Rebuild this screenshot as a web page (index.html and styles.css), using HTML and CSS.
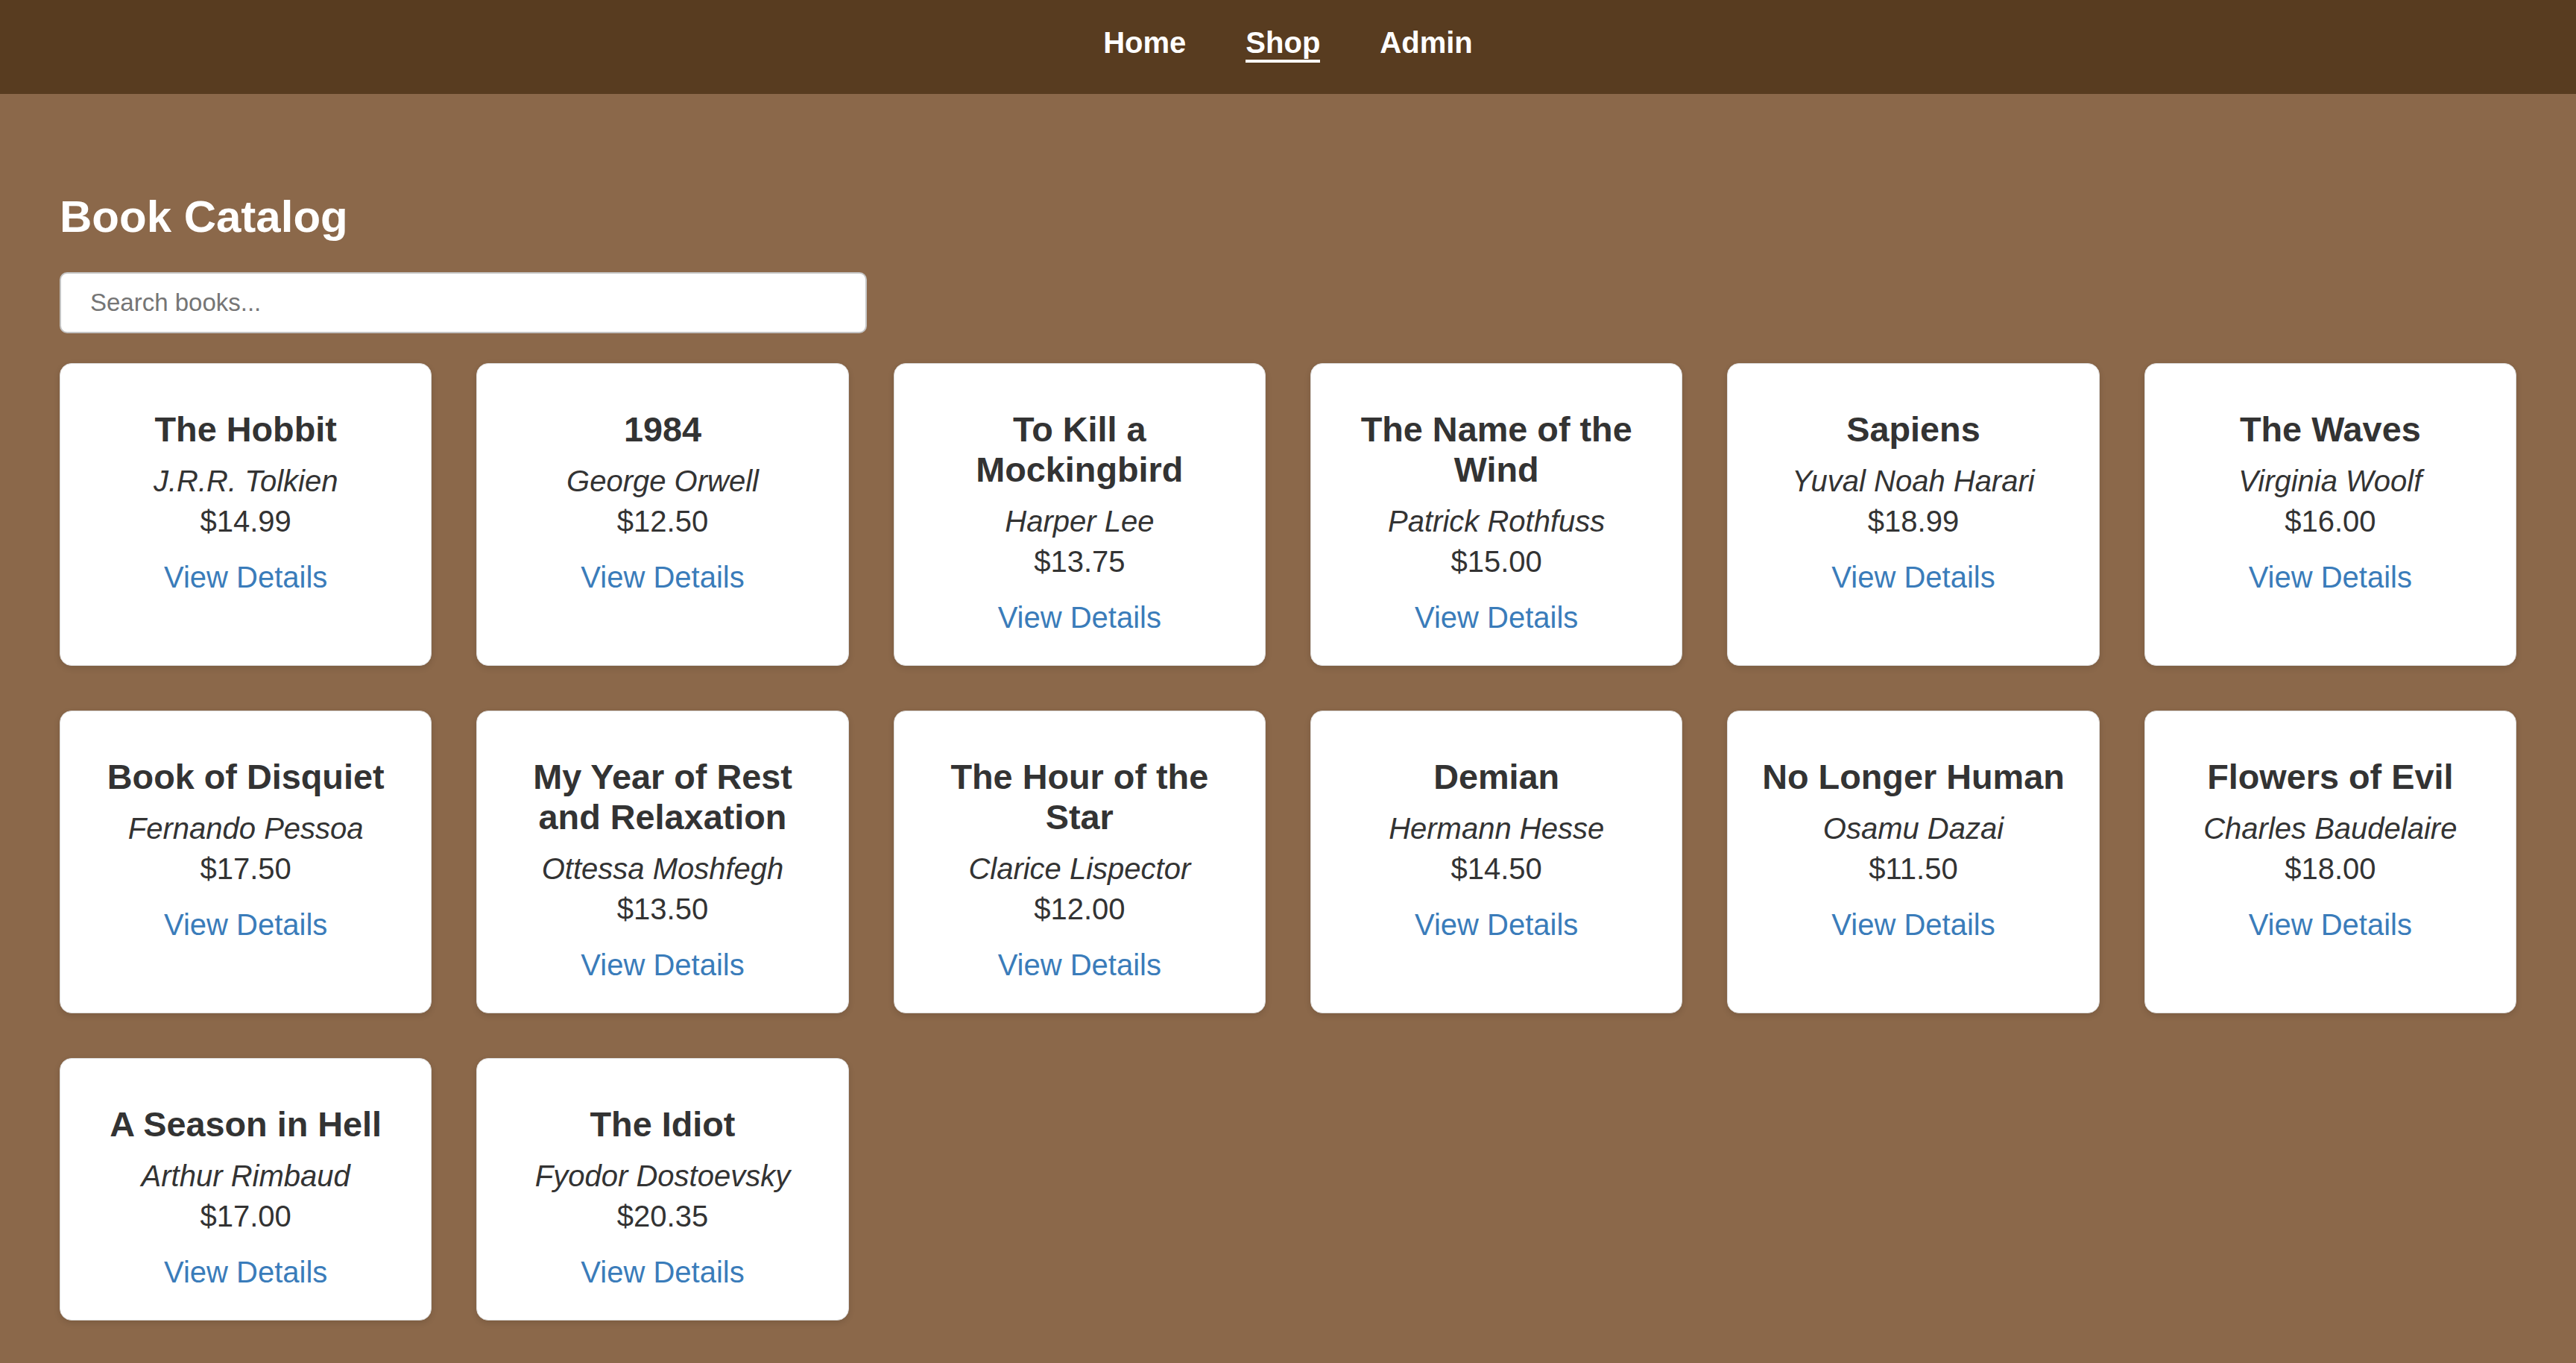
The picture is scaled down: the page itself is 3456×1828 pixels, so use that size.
FILE: index.html
```html
<!DOCTYPE html>
<html lang="en">
<head>
<meta charset="utf-8">
<title>Book Catalog</title>
<link rel="stylesheet" href="styles.css">
</head>
<body>
<header class="topbar">
  <nav class="nav">
    <a class="nav-link" href="#">Home</a>
    <a class="nav-link active" href="#">Shop</a>
    <a class="nav-link" href="#">Admin</a>
  </nav>
</header>
<main class="page">
  <h1 class="page-title">Book Catalog</h1>
  <input class="search" type="text" placeholder="Search books...">
  <section class="grid">
    <article class="card"><h3 class="card-title">The Hobbit</h3><p class="author">J.R.R. Tolkien</p><p class="price">$14.99</p><a class="details" href="#">View Details</a></article>
    <article class="card"><h3 class="card-title">1984</h3><p class="author">George Orwell</p><p class="price">$12.50</p><a class="details" href="#">View Details</a></article>
    <article class="card"><h3 class="card-title">To Kill a Mockingbird</h3><p class="author">Harper Lee</p><p class="price">$13.75</p><a class="details" href="#">View Details</a></article>
    <article class="card"><h3 class="card-title">The Name of the Wind</h3><p class="author">Patrick Rothfuss</p><p class="price">$15.00</p><a class="details" href="#">View Details</a></article>
    <article class="card"><h3 class="card-title">Sapiens</h3><p class="author">Yuval Noah Harari</p><p class="price">$18.99</p><a class="details" href="#">View Details</a></article>
    <article class="card"><h3 class="card-title">The Waves</h3><p class="author">Virginia Woolf</p><p class="price">$16.00</p><a class="details" href="#">View Details</a></article>
    <article class="card"><h3 class="card-title">Book of Disquiet</h3><p class="author">Fernando Pessoa</p><p class="price">$17.50</p><a class="details" href="#">View Details</a></article>
    <article class="card"><h3 class="card-title">My Year of Rest and Relaxation</h3><p class="author">Ottessa Moshfegh</p><p class="price">$13.50</p><a class="details" href="#">View Details</a></article>
    <article class="card"><h3 class="card-title">The Hour of the Star</h3><p class="author">Clarice Lispector</p><p class="price">$12.00</p><a class="details" href="#">View Details</a></article>
    <article class="card"><h3 class="card-title">Demian</h3><p class="author">Hermann Hesse</p><p class="price">$14.50</p><a class="details" href="#">View Details</a></article>
    <article class="card"><h3 class="card-title">No Longer Human</h3><p class="author">Osamu Dazai</p><p class="price">$11.50</p><a class="details" href="#">View Details</a></article>
    <article class="card"><h3 class="card-title">Flowers of Evil</h3><p class="author">Charles Baudelaire</p><p class="price">$18.00</p><a class="details" href="#">View Details</a></article>
    <article class="card"><h3 class="card-title">A Season in Hell</h3><p class="author">Arthur Rimbaud</p><p class="price">$17.00</p><a class="details" href="#">View Details</a></article>
    <article class="card"><h3 class="card-title">The Idiot</h3><p class="author">Fyodor Dostoevsky</p><p class="price">$20.35</p><a class="details" href="#">View Details</a></article>
  </section>
</main>
</body>
</html>
```

FILE: styles.css
```css
* {
  box-sizing: border-box;
}

html, body {
  margin: 0;
  padding: 0;
}

body {
  background: #8b684a;
  font-family: "Liberation Sans", Arial, Helvetica, sans-serif;
  font-size: 40px;
  color: #333333;
  min-height: 1828px;
}

.topbar {
  background: #583c20;
  height: 126px;
  padding-top: 35px;
}

.nav {
  display: flex;
  justify-content: center;
  gap: 80px;
}

.nav-link {
  color: #ffffff;
  font-weight: bold;
  font-size: 40px;
  text-decoration: none;
  border-bottom: 4px solid transparent;
}

.nav-link.active {
  border-bottom-color: #ffffff;
}

.page {
  padding: 130px 80px 40px;
}

.page-title {
  margin: 0 0 40px;
  font-size: 60px;
  font-weight: bold;
  color: #ffffff;
}

.search {
  display: block;
  width: 1083px;
  height: 82px;
  margin: 0 0 40px;
  padding: 0 39px;
  border: 2px solid #c4c4c4;
  border-radius: 10px;
  background: #ffffff;
  font-family: "Liberation Sans", Arial, Helvetica, sans-serif;
  font-size: 33px;
  color: #333333;
  outline: none;
}

.search::placeholder {
  color: #757575;
}

.grid {
  display: grid;
  grid-template-columns: repeat(6, 1fr);
  gap: 60px;
}

.card {
  background: #ffffff;
  border: 1px solid #dddddd;
  border-radius: 16px;
  box-shadow: 0 3px 8px rgba(0, 0, 0, 0.12);
  padding: 41px 40px 41px;
  text-align: center;
}

.card-title {
  margin: 20px 0 20px;
  font-size: 46.8px;
  font-weight: bold;
  color: #333333;
}

.author {
  margin: 0;
  font-style: italic;
}

.price {
  margin: 9px 0 0;
}

.details {
  display: inline-block;
  margin-top: 30px;
  color: #3a7cba;
  text-decoration: none;
}
```
